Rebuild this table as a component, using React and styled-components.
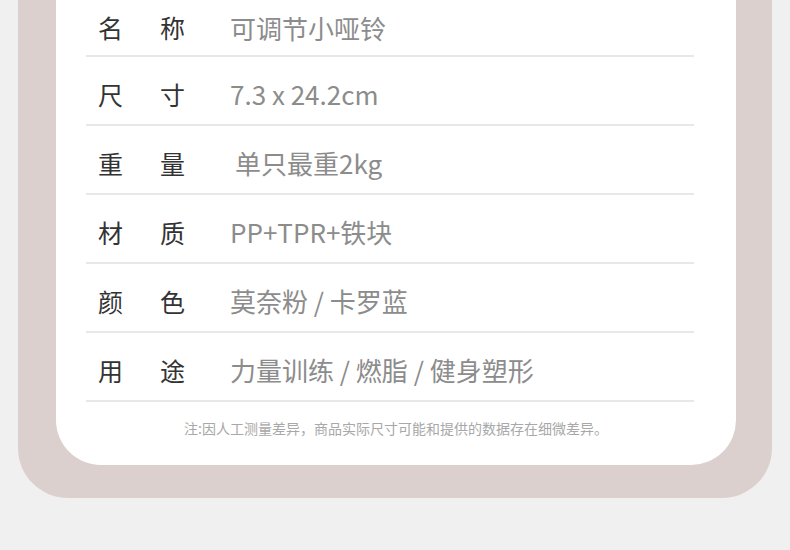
import React from 'react';
import styled, { createGlobalStyle } from 'styled-components';

const specs = [
  { label: ['名', '称'], value: '可调节小哑铃' },
  { label: ['尺', '寸'], value: '7.3 x 24.2cm' },
  { label: ['重', '量'], value: '单只最重2kg', indent: true },
  { label: ['材', '质'], value: 'PP+TPR+铁块' },
  { label: ['颜', '色'], value: '莫奈粉 / 卡罗蓝' },
  { label: ['用', '途'], value: '力量训练 / 燃脂 / 健身塑形' },
];

export default function App() {
  return (
    <>
      <GlobalStyle />
      <Page>
        <Panel>
          <Card>
            <SpecList>
              {specs.map((spec, i) => (
                <Row key={spec.value} $first={i === 0}>
                  <Label>
                    <span>{spec.label[0]}</span>
                    <span>{spec.label[1]}</span>
                  </Label>
                  <Value $indent={spec.indent}>{spec.value}</Value>
                </Row>
              ))}
            </SpecList>
            <Note>注:因人工测量差异，商品实际尺寸可能和提供的数据存在细微差异。</Note>
          </Card>
        </Panel>
      </Page>
    </>
  );
}

const GlobalStyle = createGlobalStyle`
  html, body {
    margin: 0;
    padding: 0;
    background: #f0f0f0;
  }
  body {
    font-family: 'Noto Sans CJK SC', 'Noto Sans', sans-serif;
  }
`;

const Page = styled.div`
  width: 790px;
  height: 550px;
  overflow: hidden;
  background: #f0f0f0;
`;

const Panel = styled.div`
  margin-left: 18px;
  width: 754px;
  box-sizing: border-box;
  padding: 0 36px 33px 38px;
  background: #dcd0cf;
  border-radius: 0 0 50px 50px;
`;

const Card = styled.div`
  background: #ffffff;
  border-radius: 0 0 45px 45px;
  padding-bottom: 27px;
`;

const SpecList = styled.div`
  display: flex;
  flex-direction: column;
  margin: 0 42px 0 30px;
`;

const Row = styled.div`
  display: flex;
  align-items: center;
  box-sizing: border-box;
  height: ${(p) => (p.$first ? '57px' : '69px')};
  padding: ${(p) => (p.$first ? '0' : '7px')} 0 0 12px;
  border-bottom: 2px solid #e8e8e8;
`;

const Label = styled.div`
  display: flex;
  justify-content: space-between;
  width: 87px;
  font-size: 25px;
  color: #333333;
  line-height: 1;
`;

const Value = styled.div`
  margin-left: ${(p) => (p.$indent ? '50px' : '45px')};
  font-size: 26px;
  color: #8c8c8c;
  line-height: 1;
`;

const Note = styled.div`
  margin-top: 16px;
  text-align: center;
  font-size: 14px;
  line-height: 20px;
  color: #a8a8a8;
`;
